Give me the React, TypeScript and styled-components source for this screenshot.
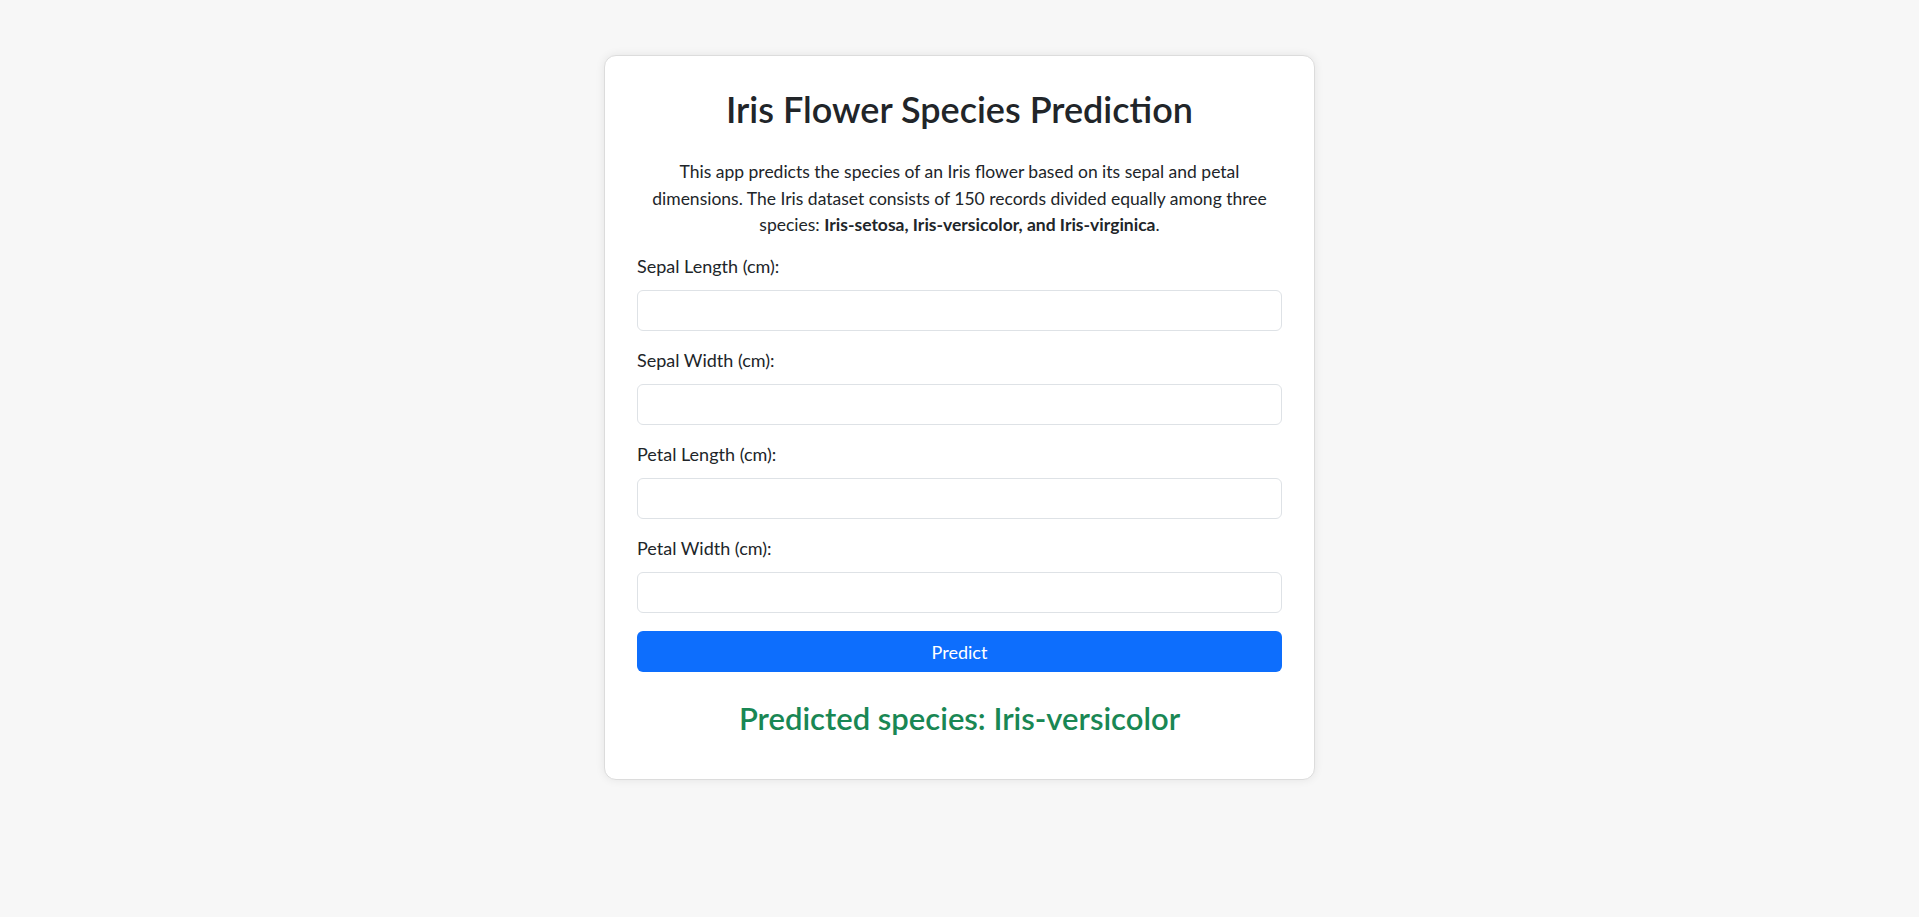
import styled, { createGlobalStyle } from 'styled-components';

//----------------------------------------- Global -----------------------------------------//
const GlobalStyle = createGlobalStyle`
    body {
        margin: 0;
        background-color: #f7f7f7;
        font-family: Lato, "Noto Sans", sans-serif;
        color: #212529;
    }
    * { box-sizing: border-box; }
`;

const fields = [
    { id: 'sepal_length', label: 'Sepal Length (cm):' },
    { id: 'sepal_width', label: 'Sepal Width (cm):' },
    { id: 'petal_length', label: 'Petal Length (cm):' },
    { id: 'petal_width', label: 'Petal Width (cm):' },
];

const App: React.FC = () => {
    return (
        <>
            <GlobalStyle />
            <Page>
                <Card>
                    <Title>Iris Flower Species Prediction</Title>
                    <Description>
                        This app predicts the species of an Iris flower based on its sepal and petal dimensions.
                        The Iris dataset consists of 150 records divided equally among three species:{' '}
                        <strong>Iris-setosa, Iris-versicolor, and Iris-virginica</strong>.
                    </Description>
                    <Form onSubmit={(e) => e.preventDefault()}>
                        {fields.map((f) => (
                            <FieldGroup key={f.id}>
                                <Label htmlFor={f.id}>{f.label}</Label>
                                <Input id={f.id} type="text" />
                            </FieldGroup>
                        ))}
                        <PredictButton type="submit">Predict</PredictButton>
                    </Form>
                    <Result>Predicted species: Iris-versicolor</Result>
                </Card>
            </Page>
        </>
    );
};

export default App;

//----------------------------------------- Style -----------------------------------------//
const Page = styled.div`
    display: flex;
    justify-content: center;
    padding-top: 55px;
    min-height: 100vh;
`;

const Card = styled.div`
    width: 711px;
    background-color: #fff;
    border: 1px solid #dcdcdc;
    border-radius: 12px;
    box-shadow: 0 0 10px rgba(0, 0, 0, 0.08);
    padding: 32px;
    align-self: flex-start;
`;

const Title = styled.h1`
    margin: 0 0 28px;
    text-align: center;
    font-size: 36px;
    font-weight: 600;
    line-height: 1.2;
    color: #212529;
`;

const Description = styled.p`
    margin: 0 0 14.5px;
    text-align: center;
    font-size: 17.5px;
    line-height: 26.5px;

    strong { font-weight: 700; }
`;

const Form = styled.form`
    display: flex;
    flex-direction: column;
`;

const FieldGroup = styled.div`
    display: flex;
    flex-direction: column;
    margin-bottom: 16px;
`;

const Label = styled.label`
    font-size: 18px;
    line-height: 26px;
    margin-bottom: 11px;
`;

const Input = styled.input`
    height: 41px;
    width: 100%;
    border: 1px solid #dee2e6;
    border-radius: 6px;
    padding: 6px 12px;
    font-size: 17px;
    font-family: inherit;
    outline: none;
`;

const PredictButton = styled.button`
    height: 41px;
    width: 100%;
    margin-top: 2px;
    border: none;
    border-radius: 6px;
    background-color: #0d6efd;
    color: #fff;
    font-size: 18px;
    font-family: inherit;
    cursor: pointer;
`;

const Result = styled.h2`
    margin: 28px 0 9.5px;
    text-align: center;
    font-size: 31px;
    font-weight: 600;
    line-height: 1.2;
    color: #198754;
`;
